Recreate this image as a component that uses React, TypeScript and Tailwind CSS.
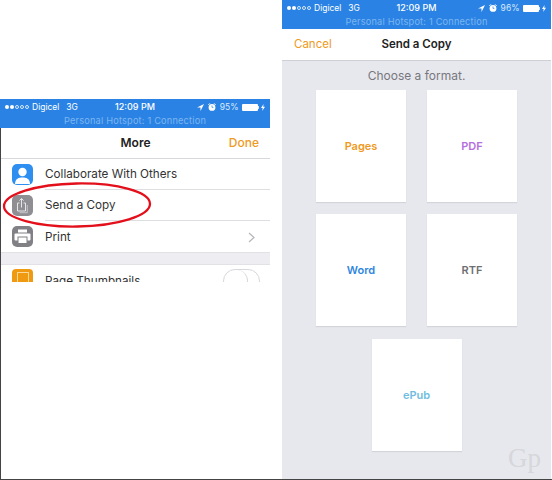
import React from "react";

function StatusBar({ battery }: { battery: string }) {
  return (
    <div className="bg-[#2a83e4] h-[29px] shrink-0 flex flex-col text-white">
      <div className="h-[15px] flex items-center relative text-[8.5px] pl-[5px] pr-[5px] pt-[1px]">
        <div className="flex items-center gap-[1px]">
          <span className="w-[4px] h-[4px] rounded-full bg-white" />
          <span className="w-[4px] h-[4px] rounded-full bg-white" />
          <span className="w-[4px] h-[4px] rounded-full border-[0.5px] border-white/80" />
          <span className="w-[4px] h-[4px] rounded-full border-[0.5px] border-white/80" />
          <span className="w-[4px] h-[4px] rounded-full border-[0.5px] border-white/80" />
        </div>
        <span className="ml-[3px]">Digicel</span>
        <span className="ml-[7px]">3G</span>
        <span className="absolute left-1/2 -translate-x-1/2 text-[9px] font-medium">12:09 PM</span>
        <div className="ml-auto flex items-center">
          <svg width="7" height="7" viewBox="0 0 8 8" className="mr-[4px]">
            <path d="M8 0 L0 4 L4 4 L4 8 Z" fill="#ffffff" />
          </svg>
          <svg width="8" height="8" viewBox="0 0 8 8" className="mr-[4px]">
            <circle cx="4" cy="4.4" r="3.4" fill="#ffffff" />
            <path d="M0.4 1.8 L1.8 0.4 M7.6 1.8 L6.2 0.4" stroke="#ffffff" strokeWidth="1" />
            <path d="M4 2.4 V4.4 H5.4" stroke="#2a83e4" strokeWidth="0.7" fill="none" />
          </svg>
          <span className="text-[#d8e9fb]">{battery}</span>
          <span className="ml-[3px] w-[16px] h-[7px] rounded-[1px] bg-white" />
          <span className="ml-[0.5px] w-[1px] h-[3px] bg-white/80" />
          <svg width="4" height="7" viewBox="0 0 4 7" className="ml-[2px]">
            <path d="M2.6 0 L0 4 L1.7 4 L1.2 7 L4 2.8 L2.2 2.8 Z" fill="#ffffff" />
          </svg>
        </div>
      </div>
      <div className="h-[14px] flex items-center justify-center text-[9.2px] tracking-[0.2px] text-[#7db5f0]">
        Personal Hotspot: 1 Connection
      </div>
    </div>
  );
}

function Row({
  label,
  iconBg,
  icon,
  border = true,
  children,
}: {
  label: string;
  iconBg: string;
  icon: React.ReactNode;
  border?: boolean;
  children?: React.ReactNode;
}) {
  return (
    <div className="h-[31px] shrink-0 flex items-center pl-[11px]">
      <div className={`w-[21px] h-[21px] rounded-[5px] flex items-center justify-center shrink-0 ${iconBg}`}>
        {icon}
      </div>
      <div
        className={`ml-[12px] flex-1 h-full flex items-center text-[11.7px] text-[#333] pt-[2px] pr-[13px] ${
          border ? "border-b border-[#dedee2]" : ""
        }`}
      >
        <span>{label}</span>
        {children}
      </div>
    </div>
  );
}

function Page({ label, color }: { label: string; color: string }) {
  return (
    <div className={`w-[90px] h-[112px] bg-white shadow-[0_1px_1px_#d3d3da] flex items-center justify-center text-[11px] font-semibold ${color}`}>
      {label}
    </div>
  );
}

export default function App() {
  return (
    <div className="w-[552px] h-[480px] flex bg-white overflow-hidden border-b border-[#444] font-['Inter','Liberation_Sans',sans-serif]">
      {/* left phone */}
      <div className="relative w-[282px] h-full flex flex-col">
        <div className="h-[99px] shrink-0" />
        <div className="w-[270px]">
          <StatusBar battery="95%" />
        </div>
        <div className="flex-1 border-l border-[#444]">
          <div className="h-[154px] w-[269px] flex flex-col overflow-hidden">
            <div className="h-[31px] shrink-0 flex items-center relative border-b border-[#d8d8dc] text-[12px]">
              <span className="absolute left-1/2 -translate-x-1/2 font-semibold text-[#222]">More</span>
              <span className="ml-auto pr-[11px] font-medium text-[#ee9a23]">Done</span>
            </div>
            <Row
              label="Collaborate With Others"
              iconBg="bg-[#2f8ff0]"
              icon={
                <svg width="21" height="21" viewBox="0 0 21 21">
                  <circle cx="10.5" cy="8" r="4.2" fill="#ffffff" />
                  <path d="M3 20 C3 14.5 7 13.5 10.5 13.5 C14 13.5 18 14.5 18 20 Z" fill="#ffffff" />
                </svg>
              }
            />
            <Row
              label="Send a Copy"
              iconBg="bg-[#8e8e93]"
              icon={
                <svg width="15" height="17" viewBox="0 0 15 17" fill="none" stroke="#e6e6e8" strokeWidth="1">
                  <path d="M4.5 6 H2.5 V14 H10.5 V6 H8.5" />
                  <path d="M4.5 15.7 H12.3 V8" strokeOpacity="0.6" />
                  <path d="M6.5 10.5 V1.5 M4.4 3.6 L6.5 1.5 L8.6 3.6" />
                </svg>
              }
            />
            <Row
              label="Print"
              iconBg="bg-[#808085]"
              border={false}
              icon={
                <svg width="17" height="15" viewBox="0 0 17 15">
                  <rect x="4" y="0.5" width="9" height="3" fill="#ffffff" />
                  <rect x="0.5" y="4.5" width="16" height="7" rx="1" fill="#ffffff" />
                  <rect x="4" y="8" width="9" height="6.5" fill="#ffffff" stroke="#808085" />
                </svg>
              }
            >
              <svg width="7" height="11" viewBox="0 0 7 11" fill="none" stroke="#b5b5ba" strokeWidth="1.2" className="ml-auto mr-[2px]">
                <path d="M1 1 L6 5.5 L1 10" />
              </svg>
            </Row>
            <div className="h-[13px] shrink-0 bg-[#eeeef2] border-t border-b border-[#e2e2e6]" />
            <div className="flex-1 flex pl-[11px] overflow-hidden">
              <div className="w-[21px] h-[21px] mt-[4px] rounded-[4px] bg-[#f09a12] flex items-start justify-center pt-[3px] shrink-0">
                <span className="w-[12px] h-[14px] border border-[#fbd99a]" />
              </div>
              <span className="ml-[12px] mt-[8px] text-[11.7px] leading-[16px] text-[#333]">Page Thumbnails</span>
              <span className="ml-auto mr-[10px] mt-[4px] w-[37px] h-[24px] rounded-full border border-[#d8d8dc] bg-white">
                <span className="block w-[24px] h-[22px] rounded-full border-r border-[#d8d8dc]" />
              </span>
            </div>
          </div>
        </div>
        {/* red callout */}
        <svg className="absolute left-[2px] top-[181px]" width="151" height="48" viewBox="0 0 151 48">
          <ellipse cx="75" cy="24" rx="73" ry="21.5" fill="none" stroke="#e3101c" strokeWidth="2.3" transform="rotate(-1 75 24)" />
        </svg>
      </div>

      {/* right phone */}
      <div className="w-[269px] h-full flex flex-col overflow-hidden">
        <StatusBar battery="96%" />
        <div className="h-[32px] shrink-0 flex items-center relative text-[11.5px] border-b border-[#cfcfd6] pt-[1px]">
          <span className="pl-[12px] text-[#ee9a23]">Cancel</span>
          <span className="absolute left-1/2 -translate-x-1/2 font-semibold text-[#222]">Send a Copy</span>
        </div>
        <div className="relative flex-1 bg-[#e7e8ed] flex flex-col items-center">
          <div className="text-[12px] text-[#77777d] mt-[7px] leading-[16px]">Choose a format.</div>
          <div className="grid grid-cols-2 gap-x-[21px] gap-y-[12px] mt-[6px]">
            <Page label="Pages" color="text-[#ef9a1f]" />
            <Page label="PDF" color="text-[#b76fe0]" />
            <Page label="Word" color="text-[#2f86e0]" />
            <Page label="RTF" color="text-[#6f6f73]" />
          </div>
          <div className="mt-[13px]">
            <Page label="ePub" color="text-[#6fbde0]" />
          </div>
          <span className="absolute right-[10px] bottom-[7px] font-['Liberation_Serif',serif] text-[27px] leading-none text-[#d6d7db]">
            Gp
          </span>
        </div>
      </div>
    </div>
  );
}
